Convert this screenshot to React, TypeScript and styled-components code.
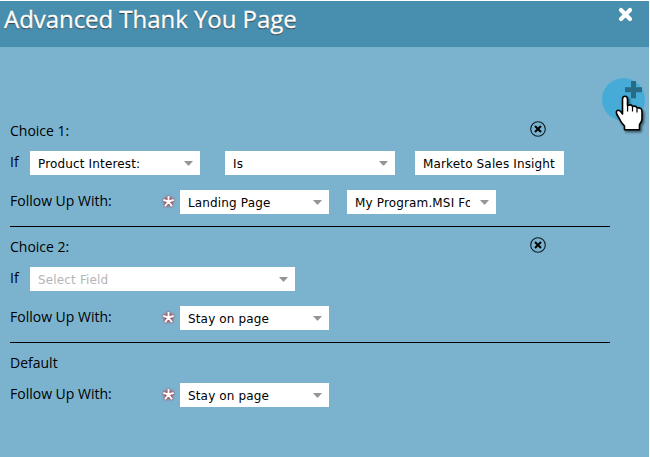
import React from 'react';
import styled, { createGlobalStyle } from 'styled-components';

const GlobalStyle = createGlobalStyle`
  * { box-sizing: border-box; }
  body { margin: 0; background: #fff; }
`;

const Dialog = styled.main`
  position: relative;
  width: 649px;
  height: 456px;
  margin-top: 1px;
  background: #7bb3cf;
  font-family: 'Open Sans', sans-serif;
  color: #000;
`;

const Header = styled.header`
  display: flex;
  justify-content: space-between;
  height: 46px;
  padding: 1px 16px 0 4px;
  background: #488eae;
`;

const Title = styled.h1`
  margin: 0;
  font-size: 24px;
  line-height: 33px;
  font-weight: 400;
  letter-spacing: -0.05px;
  white-space: nowrap;
  color: #fff;
  -webkit-text-stroke: 0.3px #fff;
  text-shadow: 0 1px 1px #333;
`;

const CloseButton = styled.button`
  width: 15px;
  height: 15px;
  margin-top: 5px;
  padding: 0;
  border: 0;
  background: none;
  svg { display: block; }
`;

const Form = styled.div`
  width: 600px;
  margin-left: 10px;
  padding-top: 63px;
`;

const Section = styled.section<{ $last?: boolean }>`
  height: ${p => (p.$last ? 100 : 117)}px;
  margin-bottom: -1px;
  padding-top: 1px;
  border-bottom: ${p => (p.$last ? 0 : 1)}px solid #000;
`;

const SectionHead = styled.div`
  display: flex;
  justify-content: space-between;
  height: 40px;
  padding: 10px 64px 0 0;
`;

const Label = styled.span<{ $width?: number }>`
  flex: none;
  width: ${p => (p.$width ? `${p.$width}px` : 'auto')};
  font-size: 14px;
  line-height: 20px;
  white-space: nowrap;
`;

const RowLabel = styled(Label)`
  padding-top: 1px;
`;

const RemoveButton = styled.button`
  width: 16px;
  height: 16px;
  padding: 0;
  border: 0;
  background: none;
  svg { display: block; }
`;

const Row = styled.div`
  display: flex;
  height: 24px;
  margin-bottom: 15px;
`;

const Field = styled.div<{ $width: number; $gap?: number; $muted?: boolean }>`
  display: flex;
  align-items: center;
  flex: none;
  width: ${p => p.$width}px;
  height: 24px;
  margin-left: ${p => p.$gap ?? 0}px;
  padding: 1px 7px 0 8px;
  background: #fff;
  color: ${p => (p.$muted ? '#b5b5b5' : '#000')};
  font-family: 'DejaVu Sans', sans-serif;
  font-size: 12px;
  line-height: 20px;
`;

const Value = styled.span`
  flex: 1;
  overflow: hidden;
  white-space: nowrap;
  letter-spacing: 0.15px;
`;

const Arrow = styled.svg`
  flex: none;
  margin: -1px 0 0 10px;
`;

const Required = styled.span`
  flex: none;
  width: 18px;
  height: 24px;
`;

const Pointer = styled.svg`
  position: absolute;
  left: 598px;
  top: 75px;
`;

const Select = ({ text, width, gap, muted }: {
  text: string; width: number; gap?: number; muted?: boolean;
}) => (
  <Field $width={width} $gap={gap} $muted={muted}>
    <Value>{text}</Value>
    <Arrow width="9" height="5" viewBox="0 0 9 5"><path d="M0 0H9L5 4.5H4Z" fill="#959595" /></Arrow>
  </Field>
);

const Remove = () => (
  <RemoveButton aria-label="Remove choice">
    <svg width="16" height="16" viewBox="0 0 16 16" fill="none">
      <circle cx="8" cy="8" r="7.3" stroke="#0b1a22" strokeWidth="1.1" />
      <path d="M5 5 11 11M11 5 5 11" stroke="#000" strokeWidth="2" />
    </svg>
  </RemoveButton>
);

const FollowUp = ({ children }: { children: React.ReactNode }) => (
  <Row>
    <RowLabel $width={152}>Follow Up With:</RowLabel>
    <Required>
      <svg width="18" height="24" viewBox="0 0 18 24" fill="none" overflow="visible">
        <defs><filter id="glow" x="-50%" y="-50%" width="200%" height="200%"><feGaussianBlur stdDeviation="1.2" /></filter></defs>
        <path d="M6.500 11.500V6M6.500 11.500 1.300 9.800M6.500 11.500 11.700 9.800M6.500 11.500 3.100 16.200M6.500 11.500 9.900 16.200" stroke="#b0404a" strokeWidth="3.6" filter="url(#glow)" />
        <path d="M6.500 11.500V6M6.500 11.500 1.300 9.800M6.500 11.500 11.700 9.800M6.500 11.500 3.100 16.200M6.500 11.500 9.900 16.200" stroke="#fff" strokeWidth="1.9" />
      </svg>
    </Required>
    {children}
  </Row>
);

export default function App() {
  return (
    <>
      <GlobalStyle />
      <Dialog>
        <Header>
          <Title>Advanced Thank You Page</Title>
          <CloseButton aria-label="Close">
            <svg width="15" height="15" viewBox="0 0 15 15"><path d="M3 3 12 12M12 3 3 12" stroke="#fff" strokeWidth="4.2" strokeLinecap="round" /></svg>
          </CloseButton>
        </Header>
        <Form>
          <Section>
            <SectionHead><Label>Choice 1:</Label><Remove /></SectionHead>
            <Row>
              <RowLabel $width={20}>If</RowLabel>
              <Select text="Product Interest:" width={170} />
              <Select text="Is" width={170} gap={25} />
              <Field $width={149} $gap={20}><Value>Marketo Sales Insight</Value></Field>
            </Row>
            <FollowUp>
              <Select text="Landing Page" width={149} />
              <Select text="My Program.MSI Form" width={149} gap={18} />
            </FollowUp>
          </Section>
          <Section>
            <SectionHead><Label>Choice 2:</Label><Remove /></SectionHead>
            <Row>
              <RowLabel $width={20}>If</RowLabel>
              <Select text="Select Field" width={265} muted />
            </Row>
            <FollowUp><Select text="Stay on page" width={149} /></FollowUp>
          </Section>
          <Section $last>
            <SectionHead><Label>Default</Label></SectionHead>
            <FollowUp><Select text="Stay on page" width={149} /></FollowUp>
          </Section>
        </Form>
        <Pointer width="50" height="60" viewBox="598 76 50 60">
          <defs><filter id="shade" x="-30%" y="-30%" width="170%" height="170%"><feDropShadow dx="1.5" dy="1.8" stdDeviation="1.3" floodOpacity=".55" /></filter></defs>
          <circle cx="623.5" cy="99.5" r="21.5" fill="#46acd7" />
          <path d="M631 81h5v6.200h6v5h-6v6h-5v-6h-6v-5h6z" fill="#276b84" />
          <path d="M622.500 112V99Q622.500 96.300 625 96.300Q627.500 96.300 627.500 99V105.500Q631.500 104 632.500 106.500Q636 105.300 637 108Q642 107 642 112V118.500Q642 122 639.500 124.500V129.700H624.500V126Q621 122.500 619 118L616.700 114Q615.600 111 618 110.300Q620 110 622.500 114Z" fill="#fff" stroke="#000" strokeWidth="1.6" strokeLinejoin="round" filter="url(#shade)" />
          <path d="M627.600 105V111.500M632.500 107V111.500M637 108.500V112.500" stroke="#000" strokeWidth="1.2" />
        </Pointer>
      </Dialog>
    </>
  );
}
